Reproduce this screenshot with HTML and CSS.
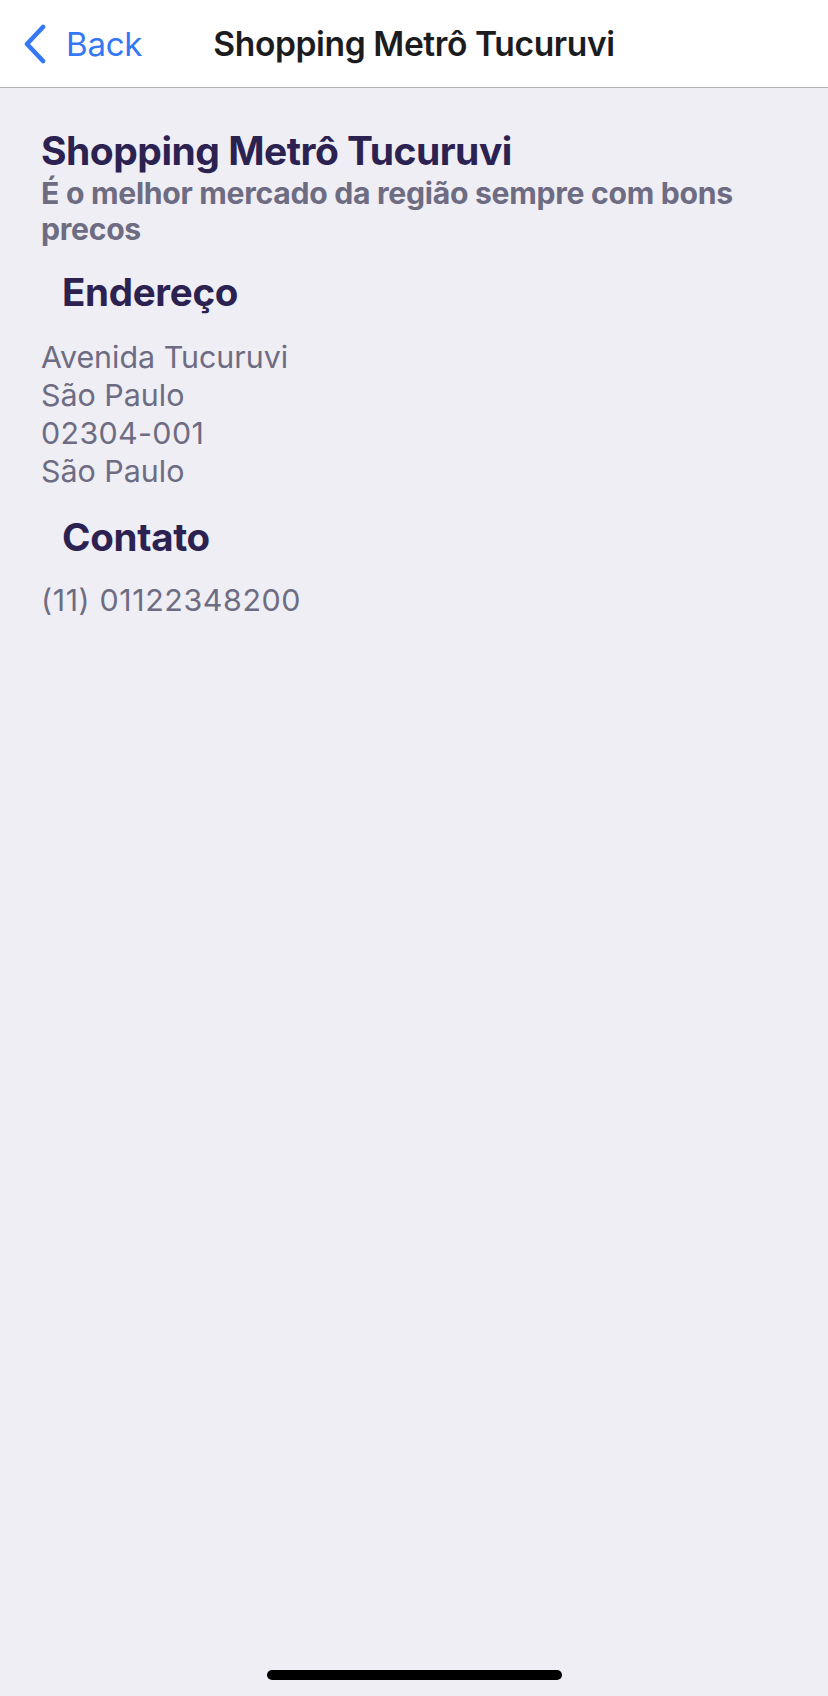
FILE: index.html
```html
<!DOCTYPE html>
<html lang="pt">
<head>
<meta charset="utf-8">
<title>Shopping Metrô Tucuruvi</title>
<link rel="stylesheet" href="styles.css">
</head>
<body>
<div class="screen">
  <header class="navbar">
    <a class="back" href="#">
      <svg class="chevron" width="26" height="40" viewBox="0 0 26 40" aria-hidden="true">
        <path d="M21 3 L5 20 L21 37" fill="none" stroke="#3478f6" stroke-width="4.6" stroke-linecap="round" stroke-linejoin="round"/>
      </svg>
      <span class="back-label">Back</span>
    </a>
    <h1 class="nav-title">Shopping Metrô Tucuruvi</h1>
  </header>
  <main class="content">
    <h2 class="title">Shopping Metrô Tucuruvi</h2>
    <p class="subtitle">É o melhor mercado da região sempre com bons precos</p>
    <h3 class="section-heading heading-address">Endereço</h3>
    <div class="lines">
      <div>Avenida Tucuruvi</div>
      <div>São Paulo</div>
      <div class="num">02304-001</div>
      <div>São Paulo</div>
    </div>
    <h3 class="section-heading heading-contact">Contato</h3>
    <div class="lines">
      <div class="num phone">(11) 01122348200</div>
    </div>
  </main>
  <div class="home-indicator"></div>
</div>
</body>
</html>
```
FILE: styles.css
```css
* { box-sizing: border-box; }
html, body {
  margin: 0;
  padding: 0;
}
body {
  background: #efeef4;
  font-family: Inter, "Noto Sans", "Liberation Sans", sans-serif;
}
.screen {
  width: 828px;
  height: 1696px;
  display: flex;
  flex-direction: column;
  background: #efeef4;
  position: relative;
}
.navbar {
  height: 88px;
  flex: 0 0 88px;
  background: #ffffff;
  border-bottom: 1px solid #b4b4b8;
  display: flex;
  align-items: center;
  justify-content: center;
  position: relative;
}
.back {
  position: absolute;
  left: 22px;
  top: 24px;
  display: flex;
  align-items: center;
  text-decoration: none;
  color: #3478f6;
}
.chevron {
  display: block;
}
.back-label {
  margin-left: 18px;
  font-size: 33px;
  font-weight: 400;
  letter-spacing: -0.2px;
  line-height: 40px;
}
.nav-title {
  margin: 0;
  font-size: 33.6px;
  font-weight: 600;
  color: #1c1c1e;
  letter-spacing: -0.4px;
  line-height: 40px;
}
.content {
  padding: 39px 41px 0 41px;
  display: flex;
  flex-direction: column;
}
.title {
  margin: 0;
  font-size: 39px;
  line-height: 48px;
  font-weight: 700;
  color: #2b2252;
  letter-spacing: -0.5px;
}
.subtitle {
  margin: 0;
  font-size: 30.2px;
  line-height: 36px;
  font-weight: 700;
  color: #6d6c82;
  letter-spacing: -0.3px;
  max-width: 760px;
}
.section-heading {
  margin: 0;
  padding-left: 21px;
  font-size: 38.5px;
  line-height: 46px;
  font-weight: 700;
  color: #2b2252;
  letter-spacing: -0.3px;
}
.heading-address { margin-top: 22px; }
.heading-contact { margin-top: 24px; }
.lines {
  margin-top: 23px;
  font-size: 30.4px;
  line-height: 38px;
  font-weight: 400;
  color: #6d6c82;
}
.num { letter-spacing: 0.35px; }
.phone { letter-spacing: 0.6px; }
.heading-contact + .lines { margin-top: 21px; }
.home-indicator {
  position: absolute;
  left: 267px;
  bottom: 16px;
  width: 295px;
  height: 10px;
  border-radius: 5px;
  background: #000000;
}
```
